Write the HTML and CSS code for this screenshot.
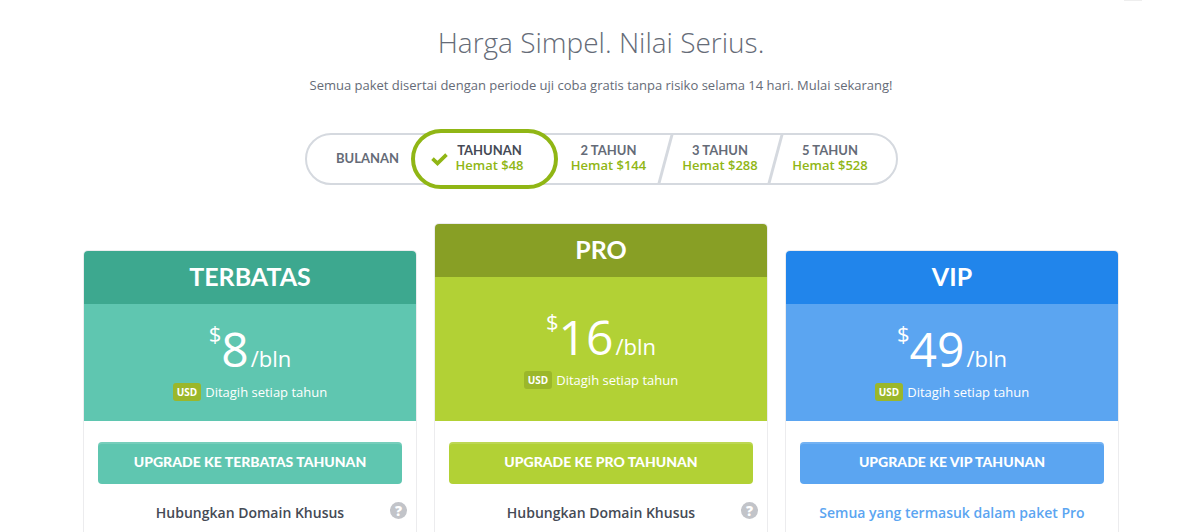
FILE: index.html
```html
<!DOCTYPE html>
<html lang="id">
<head>
  <meta charset="UTF-8">
  <meta name="viewport" content="width=device-width, initial-scale=1.0">
  <title>Harga</title>
  <link rel="stylesheet" href="styles.css">
</head>
<body>
  <div class="topbar"><span class="topbar-tab"></span></div>

  <header class="intro">
    <h1>Harga Simpel. Nilai Serius.</h1>
    <p>Semua paket disertai dengan periode uji coba gratis tanpa risiko selama 14 hari. Mulai sekarang!</p>
  </header>

  <form class="periods">
    <label class="period first" for="p1">
      <input type="radio" id="p1" name="period">
      <span class="period-text">BULANAN</span>
    </label>
    <label class="period active" for="p12">
      <input type="radio" id="p12" name="period" checked>
      <svg class="check" width="17" height="13" viewBox="0 0 17 13"><path d="M1.5 5.6 L6.5 10.4 L15.5 1.6" fill="none" stroke="#90b615" stroke-width="3.6"/></svg>
      <span class="period-text">TAHUNAN <em>Hemat $48</em></span>
    </label>
    <label class="period" for="p24">
      <input type="radio" id="p24" name="period">
      <span class="period-text">2 TAHUN <em>Hemat $144</em></span>
    </label>
    <label class="period divided" for="p36">
      <input type="radio" id="p36" name="period">
      <span class="period-text">3 TAHUN <em>Hemat $288</em></span>
    </label>
    <label class="period divided last" for="p60">
      <input type="radio" id="p60" name="period">
      <span class="period-text">5 TAHUN <em>Hemat $528</em></span>
    </label>
  </form>

  <main class="plans">
    <section class="plan terbatas">
      <h2>TERBATAS</h2>
      <div class="price">
        <div class="amount"><span class="currency">$</span><span class="number">8</span><span class="per">/bln</span></div>
        <p class="billing"><span class="usd">USD</span>Ditagih setiap tahun</p>
      </div>
      <div class="plan-body">
        <button type="button" class="upgrade">UPGRADE KE TERBATAS TAHUNAN</button>
        <div class="feature">
          <span class="feature-name">Hubungkan Domain Khusus</span>
          <button type="button" class="help" aria-label="Bantuan">?</button>
        </div>
      </div>
    </section>

    <section class="plan pro">
      <h2>PRO</h2>
      <div class="price">
        <div class="amount"><span class="currency">$</span><span class="number">16</span><span class="per">/bln</span></div>
        <p class="billing"><span class="usd">USD</span>Ditagih setiap tahun</p>
      </div>
      <div class="plan-body">
        <button type="button" class="upgrade">UPGRADE KE PRO TAHUNAN</button>
        <div class="feature">
          <span class="feature-name">Hubungkan Domain Khusus</span>
          <button type="button" class="help" aria-label="Bantuan">?</button>
        </div>
      </div>
    </section>

    <section class="plan vip">
      <h2>VIP</h2>
      <div class="price">
        <div class="amount"><span class="currency">$</span><span class="number">49</span><span class="per">/bln</span></div>
        <p class="billing"><span class="usd">USD</span>Ditagih setiap tahun</p>
      </div>
      <div class="plan-body">
        <button type="button" class="upgrade">UPGRADE KE VIP TAHUNAN</button>
        <div class="feature">
          <span class="feature-name">Semua yang termasuk dalam paket Pro</span>
        </div>
      </div>
    </section>
  </main>
</body>
</html>
```
FILE: styles.css
```css
* {
  box-sizing: border-box;
}

body {
  margin: 0;
  padding-left: 2px;
  font-family: "Open Sans", sans-serif;
  color: #656b77;
  background: #fff;
}

.topbar {
  display: flex;
  justify-content: flex-end;
  padding-right: 58px;
}

.topbar-tab {
  width: 18px;
  height: 1px;
  background: #eee;
}

.intro {
  text-align: center;
}

.intro h1 {
  margin: 21px 0 0;
  font-size: 28px;
  line-height: 40px;
  font-weight: 300;
}

.intro p {
  margin: 13px 0 0;
  font-size: 13px;
  line-height: 20px;
}

/* billing period switch */
.periods {
  display: flex;
  width: fit-content;
  height: 52px;
  margin: 38px auto 0;
  border: 2px solid #d5d9df;
  border-radius: 26px;
}

.period {
  display: flex;
  align-items: center;
  justify-content: center;
  width: 110px;
  cursor: pointer;
}

.period input {
  appearance: none;
  width: 0;
  height: 0;
  margin: 0;
}

.period-text {
  padding-bottom: 2px;
  font-family: Lato, sans-serif;
  font-size: 13px;
  line-height: 15px;
  font-weight: 700;
  text-align: center;
}

.period-text em {
  display: block;
  font-family: "Open Sans", sans-serif;
  font-style: normal;
  font-weight: 600;
  color: #90b615;
}

.period.first {
  width: 108px;
  padding-left: 14px;
}

.period.active {
  justify-content: flex-start;
  gap: 8px;
  width: 147px;
  margin: -6px -4px;
  padding-left: 16px;
  border: 4px solid #90b615;
  border-radius: 30px;
  background: #fff;
  color: #454a55;
}

.period.active input {
  display: block;
  margin-right: -8px;
}

/* slanted line between two periods */
.divided::before {
  content: "";
  width: 3px;
  height: 48px;
  margin-right: auto;
  background: #d5d9df;
  transform: skewX(-15deg);
}

.divided .period-text {
  margin-right: auto;
}

.period.last {
  width: 122px;
  padding-right: 12px;
}

.check {
  flex: none;
}

/* plans */
.plans {
  display: flex;
  align-items: flex-end;
  gap: 17px;
  max-width: 1036px;
  margin: 38px auto 0;
}

.plan {
  flex: 1;
  border: 1px solid #ececee;
  border-bottom: none;
  border-radius: 5px 5px 0 0;
}

.plan h2 {
  margin: 0;
  padding-bottom: 2px;
  border-radius: 4px 4px 0 0;
  font-family: Lato, sans-serif;
  font-size: 25px;
  line-height: 51px;
  font-weight: 700;
  text-align: center;
  color: #fff;
}

.price {
  padding: 14px 0 18px;
  text-align: center;
  color: #fff;
}

.pro .price {
  padding: 29px 0 30px;
}

.amount {
  display: flex;
  justify-content: center;
  align-items: baseline;
  height: 62px;
  line-height: 62px;
}

.currency {
  align-self: flex-start;
  font-size: 22px;
  line-height: 30px;
}

.number {
  font-size: 48px;
}

.per {
  margin-left: 2px;
  font-size: 22px;
}

.billing {
  display: flex;
  justify-content: center;
  align-items: center;
  gap: 4px;
  margin: 1px 0 0;
  font-size: 13px;
  line-height: 22px;
}

.usd {
  padding: 0 4px;
  border-radius: 3px;
  background: #9bb72a;
  font-size: 10px;
  line-height: 18px;
  font-weight: 700;
}

.plan-body {
  padding: 21px 14px 8px;
}

.upgrade {
  width: 100%;
  height: 42px;
  padding: 0 0 4px;
  border: none;
  border-radius: 4px;
  font-family: Lato, sans-serif;
  font-size: 14px;
  font-weight: 900;
  color: #fff;
  box-shadow: inset 0 2px 0 rgba(255, 255, 255, 0.15);
  cursor: pointer;
}

.feature {
  display: grid;
  grid-template-columns: 1fr auto 1fr;
  margin: 18px -5px 0;
  font-size: 14px;
  line-height: 22px;
  font-weight: 600;
  color: #454a55;
}

.feature-name {
  grid-column: 2;
}

.help {
  justify-self: end;
  width: 17px;
  height: 17px;
  padding: 0;
  border: none;
  border-radius: 50%;
  background: #c2c4c9;
  font-family: "Open Sans", sans-serif;
  font-size: 14px;
  line-height: 17px;
  font-weight: 800;
  color: #fff;
}

.terbatas h2 {
  background: #3da88f;
}

.terbatas .price,
.terbatas .upgrade {
  background-color: #5fc6b0;
}

.pro h2 {
  background: #889f25;
}

.pro .price,
.pro .upgrade {
  background-color: #b2d135;
}

.vip h2 {
  background: #2185eb;
}

.vip .price,
.vip .upgrade {
  background-color: #5ba5f1;
}

.vip .feature {
  color: #5ba5f1;
}
```
